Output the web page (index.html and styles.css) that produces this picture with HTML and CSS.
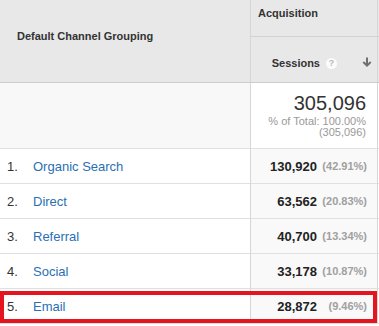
FILE: index.html
```html
<!DOCTYPE html>
<html>
<head>
<meta charset="utf-8">
<link rel="stylesheet" href="styles.css">
</head>
<body>
<div class="report">
  <div class="cell h-dim">Default Channel Grouping</div>
  <div class="cell h-group">Acquisition</div>
  <div class="cell h-group h-extra"></div>
  <div class="cell h-metric">
    <span class="h-metric-label">Sessions</span>
    <span class="help">?</span>
    <svg class="sort" width="10" height="10" viewBox="0 0 10 10"><path d="M5 0.5V8.5M1.3 5L5 8.6 8.7 5" fill="none" stroke="#6f6f6f" stroke-width="2"/></svg>
  </div>
  <div class="cell h-metric h-extra"></div>

  <div class="cell sum-dim"></div>
  <div class="cell sum-metric">
    <div class="sum-value">305,096</div>
    <div class="sum-note">% of Total: 100.00%</div>
    <div class="sum-note">(305,096)</div>
  </div>
  <div class="cell sum-extra"></div>

  <div class="cell dim"><span class="rank">1.</span><span class="label">Organic Search</span></div>
  <div class="cell metric"><b>130,920</b><span class="pct">(42.91%)</span></div>
  <div class="cell extra"></div>

  <div class="cell dim"><span class="rank">2.</span><span class="label">Direct</span></div>
  <div class="cell metric"><b>63,562</b><span class="pct">(20.83%)</span></div>
  <div class="cell extra"></div>

  <div class="cell dim"><span class="rank">3.</span><span class="label">Referral</span></div>
  <div class="cell metric"><b>40,700</b><span class="pct">(13.34%)</span></div>
  <div class="cell extra"></div>

  <div class="cell dim"><span class="rank">4.</span><span class="label">Social</span></div>
  <div class="cell metric"><b>33,178</b><span class="pct">(10.87%)</span></div>
  <div class="cell extra"></div>

  <div class="cell dim"><span class="rank">5.</span><span class="label">Email</span></div>
  <div class="cell metric"><b>28,872</b><span class="pct">(9.46%)</span></div>
  <div class="cell extra"></div>

  <div class="highlight"></div>
</div>
</body>
</html>
```

FILE: styles.css
```css
html, body {
  margin: 0;
  padding: 0;
  background: #ffffff;
  overflow: hidden;
}

.report {
  position: relative;
  display: grid;
  grid-template-columns: 251px 127px 1px;
  width: 379px;
  font-family: "Liberation Sans", Arial, sans-serif;
  color: #222222;
}

.cell {
  box-sizing: border-box;
  border-right: 1px solid #d6d6d6;
  border-bottom: 1px solid #e0e0e0;
}

.h-dim {
  grid-row: span 2;
  height: 83px;
  background: #e8e8e8;
  border-bottom-color: #cdcdcd;
  padding: 30px 0 0 17px;
  font-size: 11px;
  line-height: 13px;
  font-weight: bold;
  color: #333333;
}

.h-group {
  height: 37px;
  background: #e8e8e8;
  border-bottom-color: #d2d2d2;
  padding: 7px 0 0 7px;
  font-size: 11px;
  line-height: 13px;
  font-weight: bold;
  color: #333333;
}

.h-metric {
  height: 46px;
  background: #e8e8e8;
  border-bottom-color: #cdcdcd;
  display: flex;
  align-items: center;
  justify-content: flex-end;
  padding: 7px 5px 0 0;
  font-size: 11px;
  line-height: 13px;
  font-weight: bold;
  color: #333333;
}

.h-extra {
  padding: 0;
  border-right: none;
}

.help {
  width: 11px;
  height: 11px;
  margin-left: 6px;
  border-radius: 50%;
  background: #fbfbfb;
  color: #b9b9b9;
  font-size: 9px;
  line-height: 11px;
  text-align: center;
  font-weight: bold;
}

.sort {
  display: block;
  margin-left: 25px;
  margin-top: -3px;
}

.sum-dim {
  height: 66px;
  background: #f8f8f8;
}

.sum-metric {
  height: 66px;
  background: #ffffff;
  padding: 9px 11px 0 0;
  text-align: right;
}

.sum-extra {
  height: 66px;
  background: #ffffff;
  border-right: none;
}

.sum-value {
  font-size: 20px;
  line-height: 22px;
  color: #333333;
  margin-bottom: 2px;
}

.sum-note {
  font-size: 11px;
  line-height: 11px;
  color: #999999;
}

.dim {
  height: 35px;
  display: flex;
  align-items: center;
  padding-left: 7px;
  font-size: 13px;
  background: #ffffff;
}

.rank {
  width: 26px;
  color: #333333;
}

.label {
  color: #2a6fb4;
}

.metric {
  height: 35px;
  display: flex;
  align-items: center;
  justify-content: flex-end;
  padding-right: 10px;
  background: #f9f9f9;
  font-size: 13px;
}

.metric b {
  color: #222222;
}

.pct {
  display: inline-block;
  width: 45px;
  margin-left: 5px;
  text-align: right;
  font-size: 11px;
  font-weight: bold;
  color: #a0a0a0;
}

.extra {
  height: 35px;
  background: #ffffff;
  border-right: none;
}

.highlight {
  position: absolute;
  left: 0;
  top: 291px;
  width: 377px;
  height: 32px;
  box-sizing: border-box;
  border: 4px solid #e5141f;
}
```
